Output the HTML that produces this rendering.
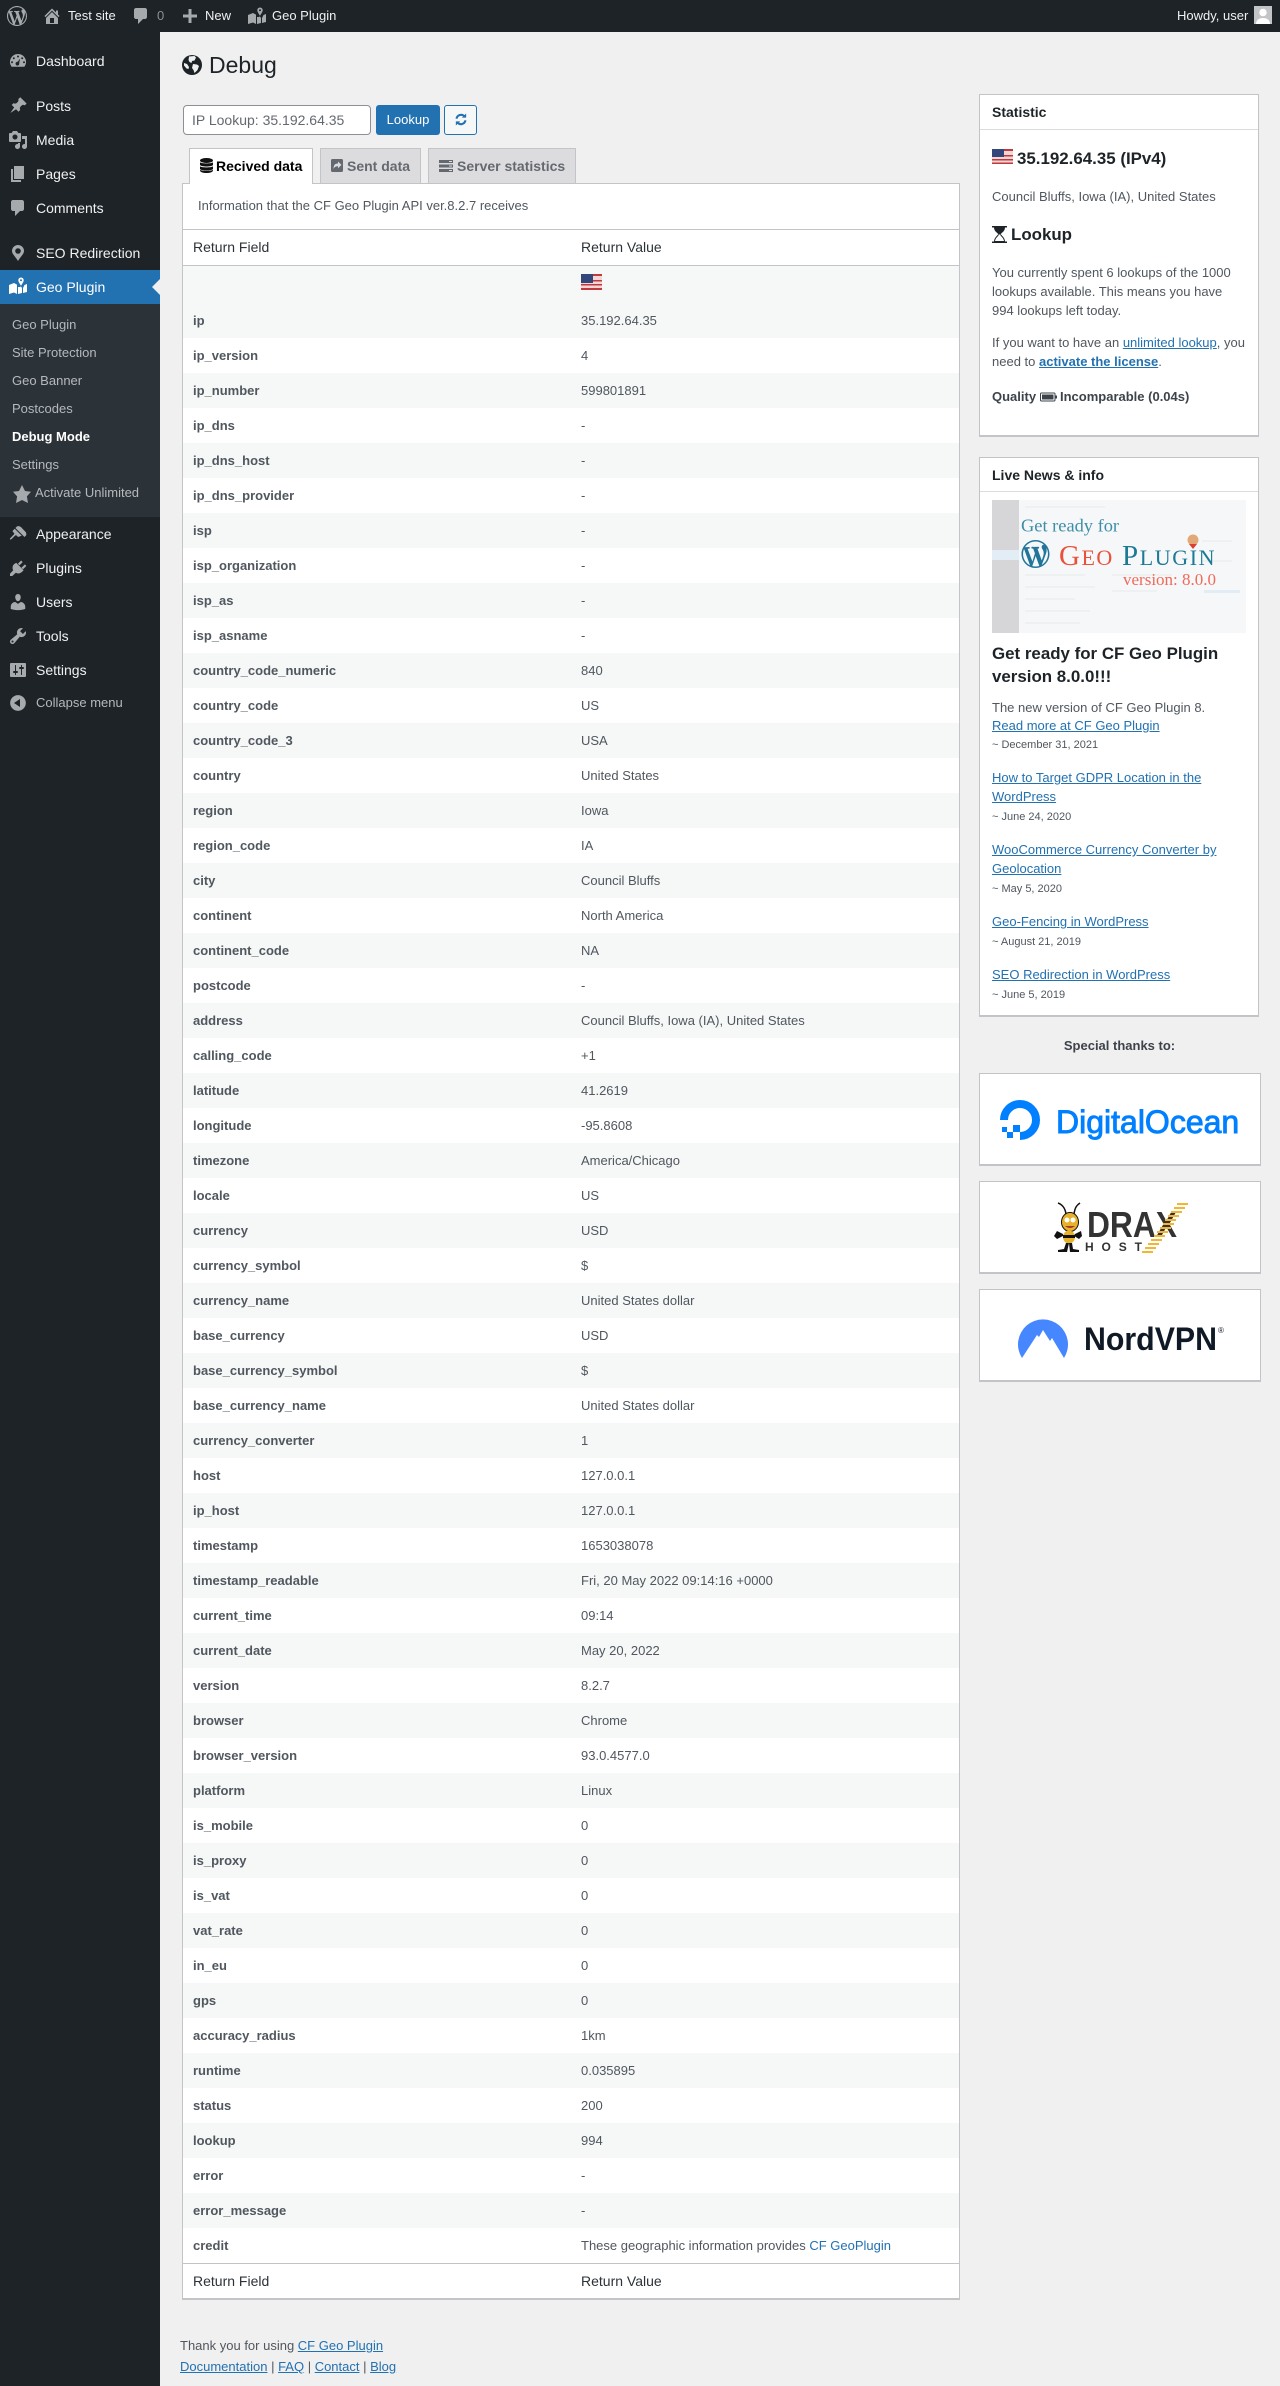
<!DOCTYPE html>
<html lang="en"><head><meta charset="utf-8"><title>Debug</title>
<style>
*{box-sizing:border-box}
html,body{margin:0;padding:0}
body{width:1280px;height:2386px;position:relative;overflow:hidden;background:#f0f0f1;font-family:"Liberation Sans",sans-serif;font-size:13px;color:#50575e}
.t{position:absolute;white-space:nowrap;line-height:20px;height:20px}
.bar{position:absolute;left:0;top:0;width:1280px;height:32px;background:#1d2327}
.side{position:absolute;left:0;top:32px;width:160px;height:2354px;background:#1d2327}
.act{position:absolute;left:0;top:270px;width:160px;height:34px;background:#2271b1}
.sub{position:absolute;left:0;top:304px;width:160px;height:213px;background:#2c3338}
.m{font-size:14px;color:#f0f0f1;left:36px}
.s{font-size:13px;color:#b4b9be;left:12px}
.b{color:#f0f0f1;font-size:13px}
svg{position:absolute;display:block}
.i{width:20px;height:20px;fill:#a7aaad;left:8px}
a{color:#2271b1;text-decoration:underline}
.box{position:absolute;background:#fff;border:1px solid #c3c4c7;border-bottom-width:2px}
.hr{position:absolute;height:1px;background:#c3c4c7}
.tab{position:absolute;top:148px;height:35px;border:1px solid #c3c4c7;border-bottom:0;background:#dcdcde;font-weight:700;font-size:14px;color:#50575e}
table{position:absolute;left:183px;top:266px;width:776px;border-collapse:collapse;table-layout:fixed}
td{height:35px;padding:0 0 0 10px;font-size:13px;color:#50575e;line-height:20px;white-space:nowrap}
td:first-child{font-weight:700;width:388px}
tr:nth-child(even){background:#f6f7f7}
tr:first-child{background:#f6f7f7}
tr:first-child td{height:37px}
td a{text-decoration:none}
.h{color:#1d2327;font-weight:700}
</style></head>
<body>
<div class="bar"></div>
<svg style="left:7px;top:6px;fill:#a7aaad" width="20" height="20" viewBox="0 0 20 20"><path d="M20 10c0-5.510-4.490-10-10-10C4.480 0 0 4.490 0 10c0 5.520 4.480 10 10 10 5.510 0 10-4.480 10-10zM7.780 15.370L4.370 6.220c.550-.020 1.170-.080 1.170-.080.500-.060.440-1.130-.060-1.110 0 0-1.450.110-2.370.110-.180 0-.370 0-.580-.010C4.120 2.690 6.870 1.110 10 1.110c2.330 0 4.450.870 6.050 2.340-.680-.110-1.650.390-1.650 1.580 0 .740.450 1.360.900 2.100.350.610.550 1.360.550 2.460 0 1.490-1.400 5-1.400 5l-3.030-8.370c.540-.020.820-.170.820-.170.500-.050.440-1.250-.060-1.220 0 0-1.440.120-2.380.120-.870 0-2.330-.120-2.330-.120-.500-.030-.560 1.200-.060 1.220l.920.080 1.260 3.410zM17.410 10c.240-.640.740-1.870.430-4.250.700 1.290 1.050 2.710 1.050 4.250 0 3.290-1.730 6.240-4.400 7.780.970-2.590 1.940-5.200 2.920-7.780zM6.100 18.090C3.120 16.650 1.110 13.530 1.110 10c0-1.300.230-2.480.72-3.590C3.250 10.300 4.670 14.200 6.100 18.090zm4.030-6.630l2.580 6.980c-.870.290-1.760.450-2.710.450-.790 0-1.570-.110-2.290-.330.810-2.380 1.620-4.740 2.420-7.100z"/></svg>
<svg style="left:42px;top:6px;fill:#a7aaad" width="20" height="20" viewBox="0 0 20 20"><path d="M16 8.500l1.530 1.530-1.060 1.060L10 4.620l-6.470 6.470-1.060-1.060L10 2.500l4 4v-2h2v4zm-6-2.460l6 5.990V18H4v-5.970zM12 17v-5H8v5h4z"/></svg>
<div class="t b" style="left:68px;top:6px">Test site</div>
<svg style="left:131px;top:6px;fill:#a7aaad" width="20" height="20" viewBox="0 0 20 20"><path d="M5 2h9c1.100 0 2 .900 2 2v7c0 1.100-.900 2-2 2h-2l-5 5v-5H5c-1.100 0-2-.900-2-2V4c0-1.100.900-2 2-2z"/></svg>
<div class="t" style="left:157px;top:6px;color:#8c8f94">0</div>
<svg style="left:180px;top:6px;fill:#a7aaad" width="20" height="20" viewBox="0 0 20 20"><path d="M17 8.500v3h-5.500V17h-3v-5.500H3v-3h5.500V3h3v5.500z"/></svg>
<div class="t b" style="left:205px;top:6px">New</div>
<svg style="left:247px;top:6px;fill:#a7aaad" width="20" height="20" viewBox="0 0 20 20"><path d="M1 9l5-2 3 1.600V18l-3-1.500L1 18zM10 18v-7l1.500 0 1.500-.5L14 12V17zM15 17l0-5 1.500-3L19 8v8zM13 1.500a2.700 2.700 0 0 1 2.700 2.700c0 1.500-1.500 3.400-2.700 5.600-1.200-2.200-2.700-4.100-2.700-5.600A2.700 2.700 0 0 1 13 1.500zm0 1.700a1 1 0 1 0 0 2 1 1 0 0 0 0-2z" fill-rule="evenodd"/></svg>
<div class="t b" style="left:272px;top:6px">Geo Plugin</div>
<div class="t b" style="left:1177px;top:6px">Howdy, user</div>
<div style="position:absolute;left:1254px;top:6px;width:18px;height:18px;background:#c3c4c7;overflow:hidden">
<svg style="left:1px;top:1px" width="16" height="17" viewBox="0 0 16 17"><circle cx="8" cy="5.500" r="3.700" fill="#fff"/><path d="M1 17c0-4 3-6 7-6s7 2 7 6z" fill="#fff"/></svg></div>

<div class="side"></div><div class="act"></div><div class="sub"></div>

<svg class="i" style="top:51px" viewBox="0 0 20 20"><path fill-rule="evenodd" d="M10 3a8 8 0 0 1 6.400 12.800H3.600A8 8 0 0 1 10 3zM10 4.500a1 1 0 1 0 0 2 1 1 0 0 0 0-2zM5.800 6.200a1 1 0 1 0 0 2 1 1 0 0 0 0-2zM14.200 6.200a1 1 0 1 0 0 2 1 1 0 0 0 0-2zM4 10.200a1 1 0 1 0 0 2 1 1 0 0 0 0-2zM16 10.200a1 1 0 1 0 0 2 1 1 0 0 0 0-2zM12.200 7.500L9.700 10.800a1.900 1.900 0 1 0 1.500 1.200z"/></svg>
<div class="t m" style="top:51px">Dashboard</div>
<svg class="i" style="top:96px" viewBox="0 0 20 20"><path d="M10.440 3.020l1.820-1.820 6.360 6.350-1.830 1.820c-1.050-.680-2.480-.570-3.410.360l-.750.750c-.920.930-1.040 2.350-.350 3.410l-1.830 1.820-2.410-2.420-5.660 3.770 3.770-5.660-2.420-2.410 1.830-1.830c1.050.690 2.480.570 3.400-.350l.750-.750c.930-.920 1.050-2.350.360-3.410z"/></svg>
<div class="t m" style="top:96px">Posts</div>
<svg class="i" style="top:130px" viewBox="0 0 20 20"><path d="M13 11V4c0-.550-.450-1-1-1h-1.670L9 1H5L3.670 3H2c-.550 0-1 .450-1 1v7c0 .550.450 1 1 1h10c.550 0 1-.450 1-1zM7 4.500c1.380 0 2.500 1.120 2.500 2.500S8.380 9.500 7 9.500 4.500 8.380 4.500 7 5.620 4.500 7 4.500zM14 6h5v10.500c0 1.380-1.120 2.500-2.500 2.500S14 17.880 14 16.500s1.120-2.500 2.500-2.500c.170 0 .340.020.500.050V9h-3V6zm-4 8.050V13h2v3.500c0 1.380-1.120 2.500-2.500 2.500S7 17.880 7 16.500 8.120 14 9.500 14c.170 0 .340.020.500.050z"/></svg>
<div class="t m" style="top:130px">Media</div>
<svg class="i" style="top:164px" viewBox="0 0 20 20"><path d="M6 15V2h10v13H6zm-1 1h8v2H3V5h2v11z"/></svg>
<div class="t m" style="top:164px">Pages</div>
<svg class="i" style="top:198px" viewBox="0 0 20 20"><path d="M5 2h9c1.100 0 2 .900 2 2v7c0 1.100-.900 2-2 2h-2l-5 5v-5H5c-1.100 0-2-.900-2-2V4c0-1.100.900-2 2-2z"/></svg>
<div class="t m" style="top:198px">Comments</div>
<svg class="i" style="top:243px" viewBox="0 0 20 20"><path fill-rule="evenodd" d="M10 2a6 6 0 0 0-6 6c0 3 3 5 6 10 3-5 6-7 6-10a6 6 0 0 0-6-6zm0 3.200a2.800 2.800 0 1 1 0 5.600 2.800 2.800 0 0 1 0-5.600z"/></svg>
<div class="t m" style="top:243px">SEO Redirection</div>
<svg class="i" style="top:276px;fill:#fff" viewBox="0 0 20 20"><path d="M1 9l5-2 3 1.600V18l-3-1.500L1 18zM10 18v-7l1.500 0 1.500-.5L14 12V17zM15 17l0-5 1.500-3L19 8v8zM13 1.500a2.700 2.700 0 0 1 2.700 2.700c0 1.500-1.500 3.400-2.700 5.600-1.200-2.200-2.700-4.100-2.700-5.600A2.700 2.700 0 0 1 13 1.500zm0 1.700a1 1 0 1 0 0 2 1 1 0 0 0 0-2z" fill-rule="evenodd"/></svg>
<div class="t m" style="top:277px;color:#fff">Geo Plugin</div>
<div style="position:absolute;left:152px;top:279px;width:0;height:0;border:8px solid transparent;border-right-color:#f0f0f1;border-left:0"></div>

<div class="t s" style="top:315px">Geo Plugin</div>
<div class="t s" style="top:343px">Site Protection</div>
<div class="t s" style="top:371px">Geo Banner</div>
<div class="t s" style="top:399px">Postcodes</div>
<div class="t s" style="top:427px;color:#fff;font-weight:700">Debug Mode</div>
<div class="t s" style="top:455px">Settings</div>
<svg style="left:12px;top:484px;fill:#a7aaad" width="20" height="20" viewBox="0 0 20 20"><path d="M10 1l3 6 6 .750-4.120 4.620L16 19l-6-3-6 3 1.120-6.630L1 7.750 7 7z"/></svg>
<div class="t s" style="top:483px;left:35px">Activate Unlimited</div>

<svg class="i" style="top:524px" viewBox="0 0 20 20"><path d="M14.480 11.060L7.410 3.990l1.500-1.500c.500-.560 2.300-.470 3.510.320 1.210.800 1.430 1.280 2.660 2.560 1.260 1.210 1.520 1.480 2.560 2.660.840.920.860 2.960.320 3.510-.100.100-1.480 1.520-1.480 1.520zm-.710.710L6.700 4.700 4.930 6.470c-.390.390-.390 1.020 0 1.410l1.060 1.060c.390.390.390 1.030 0 1.420-.600.600-1.430 1.430-2.120 2.120-.800.790-2.350 2.250-1.960 2.640l.5.500c.390.390 1.850-1.160 2.640-1.950.690-.700 1.520-1.530 2.120-2.120.390-.400 1.030-.400 1.420 0l1.060 1.050c.390.390 1.020.390 1.410 0z"/></svg>
<div class="t m" style="top:524px">Appearance</div>
<svg class="i" style="top:558px" viewBox="0 0 20 20"><path d="M13.100 2.500l1.600 1.600-3.200 3.200-1.600-1.600zM17 6.400l1.300 1.600-3.200 3.200-1.600-1.600zM8.200 4.800l7.400 7.400-1.600 1.700c-1.700 1.700-4.200 2-6.200.9L4.300 18H2v-2.300l3.200-3.500c-1.100-2-.8-4.400.9-6.100z"/></svg>
<div class="t m" style="top:558px">Plugins</div>
<svg class="i" style="top:592px" viewBox="0 0 20 20"><path d="M10 9.250c-2.270 0-2.730-3.440-2.730-3.440C7 4.020 7.820 2 9.970 2c2.160 0 2.980 2.020 2.710 3.810 0 0-.410 3.440-2.680 3.440zm0 2.570L12.720 10c2.390 0 4.520 2.330 4.520 4.530v2.490s-3.650 1.130-7.240 1.130c-3.650 0-7.240-1.130-7.240-1.130v-2.490c0-2.250 1.940-4.480 4.470-4.480z"/></svg>
<div class="t m" style="top:592px">Users</div>
<svg class="i" style="top:626px" viewBox="0 0 20 20"><path d="M16.680 9.770c-1.340 1.340-3.300 1.670-4.950.990l-5.410 6.520c-.990.990-2.590.990-3.580 0s-.990-2.590 0-3.570l6.520-5.420c-.680-1.650-.350-3.610.990-4.950 1.280-1.280 3.120-1.620 4.720-1.060l-2.890 2.890 2.820 2.820 2.860-2.870c.530 1.580.180 3.390-1.080 4.650zM3.810 16.210c.400.390 1.030.390 1.420 0 .400-.400.400-1.030 0-1.430-.390-.390-1.020-.390-1.420 0-.390.400-.390 1.030 0 1.430z"/></svg>
<div class="t m" style="top:626px">Tools</div>
<svg class="i" style="top:660px" viewBox="0 0 20 20"><path d="M18 16V4c0-.550-.450-1-1-1H3c-.550 0-1 .450-1 1v12c0 .550.450 1 1 1h14c.550 0 1-.450 1-1zM8 11h1c.550 0 1 .450 1 1s-.450 1-1 1H8v1.500c0 .280-.220.500-.500.500s-.500-.220-.500-.500V13H6c-.550 0-1-.450-1-1s.450-1 1-1h1V5.500c0-.280.220-.500.500-.500s.500.220.500.500V11zm5-2h-1c-.550 0-1-.450-1-1s.450-1 1-1h1V5.500c0-.280.220-.500.500-.500s.500.220.500.500V7h1c.550 0 1 .450 1 1s-.450 1-1 1h-1v5.500c0 .280-.220.500-.500.500s-.500-.220-.500-.500V9z"/></svg>
<div class="t m" style="top:660px">Settings</div>
<svg class="i" style="top:693px" viewBox="0 0 20 20"><path fill-rule="evenodd" d="M10 2.160c4.330 0 7.840 3.510 7.840 7.840S14.330 17.840 10 17.840 2.160 14.330 2.160 10 5.670 2.160 10 2.160zM12 14V6l-6 4z"/></svg>
<div class="t m" style="top:693px;font-size:13px;color:#b4b9be">Collapse menu</div>

<!-- Heading -->
<svg style="left:181px;top:54px" width="22" height="22" viewBox="0 0 22 22"><circle cx="11" cy="11" r="10" fill="#1d2327"/><path fill="#f0f0f1" d="M8 2.500l5.500-.5 1.500 1.500-1.500 3-2.500.5-.5 2-2-1-1-2zM12 10l4 .5 2 1.500-1.500 4-3 3-1-3-1.500-2zM3 9l3 1 2 3-.5 2-2-.5-2.500-3z"/></svg>
<div class="t" style="left:209px;top:50px;height:30px;line-height:30px;font-size:23px;color:#1d2327">Debug</div>

<!-- Lookup form -->
<div style="position:absolute;left:183px;top:105px;width:188px;height:30px;background:#fff;border:1px solid #8c8f94;border-radius:4px"></div>
<div class="t" style="left:192px;top:110px;font-size:14px;color:#646970">IP Lookup: 35.192.64.35</div>
<div style="position:absolute;left:376px;top:105px;width:64px;height:30px;background:#2271b1;border-radius:3px;color:#fff;text-align:center;line-height:30px">Lookup</div>
<div style="position:absolute;left:444px;top:105px;width:33px;height:30px;background:#f6f7f7;border:1px solid #2271b1;border-radius:3px"></div>
<svg style="left:455px;top:113px" width="12" height="13" viewBox="0 0 14 14"><path d="M1.800 6A5.300 5.300 0 0 1 11 3.400" fill="none" stroke="#2271b1" stroke-width="2.400"/><path d="M8 4.800h5V0z" fill="#2271b1"/><path d="M12.200 8A5.300 5.300 0 0 1 3 10.600" fill="none" stroke="#2271b1" stroke-width="2.400"/><path d="M6 9.200H1V14z" fill="#2271b1"/></svg>

<!-- Main box -->
<div class="box" style="left:182px;top:183px;width:778px;height:2117px"></div>
<div class="tab" style="left:189px;width:124px;height:36px;background:#fff;color:#000;z-index:2"></div>
<svg style="left:200px;top:158px;z-index:3" width="13" height="15" viewBox="0 0 13 15"><ellipse cx="6.500" cy="2.500" rx="6.500" ry="2.500" fill="#111"/><path d="M0 4.300c1 1.500 12 1.500 13 0V7c-1 2-12 2-13 0zM0 8.300c1 1.500 12 1.500 13 0V11c-1 2-12 2-13 0zM0 11.800c1 1.500 12 1.500 13 0V12.500C13 14 10 15 6.500 15S0 14 0 12.500z" fill="#111"/></svg>
<div class="t" style="left:216px;top:156px;font-size:14px;font-weight:700;color:#000;z-index:3">Recived data</div>
<div class="tab" style="left:320px;width:101px"></div>
<svg style="left:331px;top:159px" width="12" height="13" viewBox="0 0 12 13"><path fill-rule="evenodd" fill="#646970" d="M1.500 0h9A1.500 1.500 0 0 1 12 1.500v10a1.500 1.500 0 0 1-1.500 1.500h-9A1.500 1.500 0 0 1 0 11.500v-10A1.500 1.500 0 0 1 1.500 0zM7 2.500v2C4 4.500 2.500 6 2.500 10c.8-2 2.200-2.800 4.500-2.800v2l3.500-3.300z"/></svg>
<div class="t" style="left:347px;top:156px;font-size:14px;font-weight:700;color:#646970">Sent data</div>
<div class="tab" style="left:428px;width:148px"></div>
<svg style="left:439px;top:160px" width="14" height="12" viewBox="0 0 14 12"><path fill-rule="evenodd" fill="#646970" d="M0 0h14v3H0zM0 4.500h14v3H0zM0 9h14v3H0zM10 1v1h3V1zM10 5.500v1h3v-1zM10 10v1h3v-1z"/></svg>
<div class="t" style="left:457px;top:156px;font-size:14px;font-weight:700;color:#646970">Server statistics</div>

<div class="t" style="left:198px;top:196px">Information that the CF Geo Plugin API ver.8.2.7 receives</div>
<div class="hr" style="left:183px;top:229px;width:776px"></div>
<div class="t" style="left:193px;top:237px;font-size:14px;color:#2c3338">Return Field</div>
<div class="t" style="left:581px;top:237px;font-size:14px;color:#2c3338">Return Value</div>
<div class="hr" style="left:183px;top:265px;width:776px"></div>

<table>
<tr><td></td><td><svg style="left:398px;top:8px;position:absolute" width="21" height="16" viewBox="0 0 21 16"><rect width="21" height="16" fill="#f3d6d6"/><path d="M0 0h21v2H0zM0 6h21v1.500H0zM0 10h21v1.500H0zM0 14h21v2H0z" fill="#c0393f"/><rect width="12" height="9" fill="#33477a"/></svg></td></tr>
<tr><td>ip</td><td>35.192.64.35</td></tr>
<tr><td>ip_version</td><td>4</td></tr>
<tr><td>ip_number</td><td>599801891</td></tr>
<tr><td>ip_dns</td><td>-</td></tr>
<tr><td>ip_dns_host</td><td>-</td></tr>
<tr><td>ip_dns_provider</td><td>-</td></tr>
<tr><td>isp</td><td>-</td></tr>
<tr><td>isp_organization</td><td>-</td></tr>
<tr><td>isp_as</td><td>-</td></tr>
<tr><td>isp_asname</td><td>-</td></tr>
<tr><td>country_code_numeric</td><td>840</td></tr>
<tr><td>country_code</td><td>US</td></tr>
<tr><td>country_code_3</td><td>USA</td></tr>
<tr><td>country</td><td>United States</td></tr>
<tr><td>region</td><td>Iowa</td></tr>
<tr><td>region_code</td><td>IA</td></tr>
<tr><td>city</td><td>Council Bluffs</td></tr>
<tr><td>continent</td><td>North America</td></tr>
<tr><td>continent_code</td><td>NA</td></tr>
<tr><td>postcode</td><td>-</td></tr>
<tr><td>address</td><td>Council Bluffs, Iowa (IA), United States</td></tr>
<tr><td>calling_code</td><td>+1</td></tr>
<tr><td>latitude</td><td>41.2619</td></tr>
<tr><td>longitude</td><td>-95.8608</td></tr>
<tr><td>timezone</td><td>America/Chicago</td></tr>
<tr><td>locale</td><td>US</td></tr>
<tr><td>currency</td><td>USD</td></tr>
<tr><td>currency_symbol</td><td>$</td></tr>
<tr><td>currency_name</td><td>United States dollar</td></tr>
<tr><td>base_currency</td><td>USD</td></tr>
<tr><td>base_currency_symbol</td><td>$</td></tr>
<tr><td>base_currency_name</td><td>United States dollar</td></tr>
<tr><td>currency_converter</td><td>1</td></tr>
<tr><td>host</td><td>127.0.0.1</td></tr>
<tr><td>ip_host</td><td>127.0.0.1</td></tr>
<tr><td>timestamp</td><td>1653038078</td></tr>
<tr><td>timestamp_readable</td><td>Fri, 20 May 2022 09:14:16 +0000</td></tr>
<tr><td>current_time</td><td>09:14</td></tr>
<tr><td>current_date</td><td>May 20, 2022</td></tr>
<tr><td>version</td><td>8.2.7</td></tr>
<tr><td>browser</td><td>Chrome</td></tr>
<tr><td>browser_version</td><td>93.0.4577.0</td></tr>
<tr><td>platform</td><td>Linux</td></tr>
<tr><td>is_mobile</td><td>0</td></tr>
<tr><td>is_proxy</td><td>0</td></tr>
<tr><td>is_vat</td><td>0</td></tr>
<tr><td>vat_rate</td><td>0</td></tr>
<tr><td>in_eu</td><td>0</td></tr>
<tr><td>gps</td><td>0</td></tr>
<tr><td>accuracy_radius</td><td>1km</td></tr>
<tr><td>runtime</td><td>0.035895</td></tr>
<tr><td>status</td><td>200</td></tr>
<tr><td>lookup</td><td>994</td></tr>
<tr><td>error</td><td>-</td></tr>
<tr><td>error_message</td><td>-</td></tr>
<tr><td>credit</td><td>These geographic information provides <a href="#">CF GeoPlugin</a></td></tr>
</table>
<div class="hr" style="left:183px;top:2263px;width:776px"></div>
<div class="t" style="left:193px;top:2271px;font-size:14px;color:#2c3338">Return Field</div>
<div class="t" style="left:581px;top:2271px;font-size:14px;color:#2c3338">Return Value</div>

<!-- Footer -->
<div class="t" style="left:180px;top:2336px">Thank you for using <a href="#">CF Geo Plugin</a></div>
<div class="t" style="left:180px;top:2357px"><a href="#">Documentation</a> | <a href="#">FAQ</a> | <a href="#">Contact</a> | <a href="#">Blog</a></div>

<!-- Statistic -->
<div class="box" style="left:979px;top:94px;width:280px;height:343px"></div>
<div class="hr" style="left:980px;top:129px;width:278px;background:#dcdcde"></div>
<div class="t h" style="left:992px;top:102px;font-size:14px">Statistic</div>
<svg style="left:992px;top:149px" width="21" height="15" viewBox="0 0 21 15"><rect width="21" height="15" fill="#f3d6d6"/><path d="M0 0h21v2H0zM0 6h21v1.500H0zM0 10h21v1.500H0zM0 13.500h21V15H0z" fill="#c0393f"/><rect width="12" height="8" fill="#33477a"/></svg>
<div class="t h" style="left:1017px;top:149px;font-size:16.9px">35.192.64.35 (IPv4)</div>
<div class="t" style="left:992px;top:187px">Council Bluffs, Iowa (IA), United States</div>
<svg style="left:992px;top:226px" width="15" height="17" viewBox="0 0 15 17"><path d="M0 0h15v1.500H0zM0 15.500h15V17H0z" fill="#1d2327"/><path d="M2 1.500h11c0 4-4 5.500-4.500 7h-2C6 7 2 5.500 2 1.500z" fill="#1d2327"/><path d="M6.500 8.500C6 10 2.500 11.500 2.500 15.500h10c0-4-3.500-5.500-4-7" fill="none" stroke="#1d2327" stroke-width="1"/></svg>
<div class="t h" style="left:1011px;top:225px;font-size:16.9px">Lookup</div>
<div class="t" style="left:992px;top:263px">You currently spent 6 lookups of the 1000</div>
<div class="t" style="left:992px;top:282px">lookups available. This means you have</div>
<div class="t" style="left:992px;top:301px">994 lookups left today.</div>
<div class="t" style="left:992px;top:333px">If you want to have an <a href="#">unlimited lookup</a>, you</div>
<div class="t" style="left:992px;top:352px">need to <a href="#" style="font-weight:700">activate the license</a>.</div>
<div class="t" style="left:992px;top:387px;font-weight:700;color:#3c434a">Quality</div>
<svg style="left:1040px;top:392px" width="17" height="10" viewBox="0 0 17 10"><rect x=".5" y="1" width="14.500" height="8" rx="1" fill="none" stroke="#3c434a"/><rect x="2" y="2.500" width="11.500" height="5" fill="#3c434a"/><rect x="15.500" y="3.500" width="1.500" height="3" fill="#3c434a"/></svg>
<div class="t" style="left:1060px;top:387px;font-weight:700;color:#3c434a">Incomparable (0.04s)</div>

<!-- News -->
<div class="box" style="left:979px;top:457px;width:280px;height:560px"></div>
<div class="hr" style="left:980px;top:491px;width:278px;background:#dcdcde"></div>
<div class="t h" style="left:992px;top:465px;font-size:14px">Live News &amp; info</div>
<svg style="left:992px;top:500px" width="254" height="133" viewBox="0 0 254 133">
<rect width="254" height="133" fill="#f6f7f8"/>
<rect width="27" height="133" fill="#d6d6d8"/>
<rect y="50" width="27" height="10" fill="#e2edf6"/>
<g fill="#eff0f1"><rect x="33" y="6" width="80" height="2"/><rect x="33" y="74" width="60" height="2"/><rect x="33" y="86" width="70" height="2"/><rect x="33" y="98" width="50" height="2"/><rect x="33" y="110" width="65" height="2"/><rect x="33" y="122" width="55" height="2"/><rect x="120" y="74" width="60" height="2"/><rect x="120" y="90" width="45" height="2"/><rect x="210" y="40" width="30" height="2"/><rect x="210" y="60" width="30" height="2"/></g>
<rect x="212" y="90" width="36" height="3" fill="#e2ecf5"/>
<text x="29" y="31.500" font-family="Liberation Serif,serif" font-size="18.400" fill="#3e8ea8">Get ready for</text>
<g transform="translate(29.500 40) scale(1.400)" fill="#21759b"><path d="M20 10c0-5.510-4.490-10-10-10C4.480 0 0 4.490 0 10c0 5.520 4.480 10 10 10 5.510 0 10-4.480 10-10zM7.780 15.370L4.370 6.220c.550-.020 1.170-.080 1.170-.080.500-.060.440-1.130-.060-1.110 0 0-1.450.110-2.370.110-.180 0-.370 0-.580-.010C4.120 2.690 6.870 1.110 10 1.110c2.330 0 4.450.870 6.050 2.340-.680-.110-1.650.390-1.650 1.580 0 .740.450 1.360.900 2.100.350.610.550 1.360.550 2.460 0 1.490-1.400 5-1.400 5l-3.030-8.370c.540-.020.820-.170.820-.170.500-.050.440-1.250-.060-1.220 0 0-1.440.120-2.380.120-.870 0-2.330-.120-2.330-.120-.500-.030-.560 1.200-.060 1.220l.920.080 1.260 3.410zM17.410 10c.240-.640.740-1.870.430-4.250.700 1.290 1.050 2.710 1.050 4.250 0 3.290-1.730 6.240-4.400 7.780.970-2.590 1.940-5.200 2.920-7.780zM6.100 18.090C3.120 16.650 1.110 13.530 1.110 10c0-1.300.230-2.480.72-3.590C3.250 10.300 4.670 14.200 6.100 18.090zm4.030-6.630l2.580 6.980c-.870.290-1.760.450-2.710.450-.790 0-1.570-.110-2.290-.330.810-2.380 1.620-4.740 2.420-7.100z"/></g>
<text x="67" y="65" font-family="Liberation Serif,serif" font-size="29" fill="#e8523a" letter-spacing="1.500">G<tspan font-size="22">EO</tspan></text>
<text x="130" y="65" font-family="Liberation Serif,serif" font-size="29" fill="#1c7a96" letter-spacing="1.600">P<tspan font-size="22">LUGIN</tspan></text>
<circle cx="201" cy="40" r="5.500" fill="#e3a878"/><path d="M197 44l4 5 4-5z" fill="#d9402f"/>
<text x="131" y="85" font-family="Liberation Serif,serif" font-size="17" fill="#ef6a5a">version: 8.0.0</text>
</svg>
<div class="t h" style="left:992px;top:644px;font-size:16.9px">Get ready for CF Geo Plugin</div>
<div class="t h" style="left:992px;top:667px;font-size:16.9px">version 8.0.0!!!</div>
<div class="t" style="left:992px;top:698px">The new version of CF Geo Plugin 8.</div>
<div class="t" style="left:992px;top:716px"><a href="#">Read more at CF Geo Plugin</a></div>
<div class="t" style="left:992px;top:735px;font-size:11px">~ December 31, 2021</div>
<div class="t" style="left:992px;top:768px"><a href="#">How to Target GDPR Location in the</a></div>
<div class="t" style="left:992px;top:787px"><a href="#">WordPress</a></div>
<div class="t" style="left:992px;top:807px;font-size:11px">~ June 24, 2020</div>
<div class="t" style="left:992px;top:840px"><a href="#">WooCommerce Currency Converter by</a></div>
<div class="t" style="left:992px;top:859px"><a href="#">Geolocation</a></div>
<div class="t" style="left:992px;top:879px;font-size:11px">~ May 5, 2020</div>
<div class="t" style="left:992px;top:912px"><a href="#">Geo-Fencing in WordPress</a></div>
<div class="t" style="left:992px;top:932px;font-size:11px">~ August 21, 2019</div>
<div class="t" style="left:992px;top:965px"><a href="#">SEO Redirection in WordPress</a></div>
<div class="t" style="left:992px;top:985px;font-size:11px">~ June 5, 2019</div>

<div class="t" style="left:979px;width:281px;text-align:center;top:1036px;font-weight:700;color:#3c434a">Special thanks to:</div>

<!-- Logos -->
<div class="box" style="left:979px;top:1073px;width:282px;height:93px"></div>
<svg style="left:979px;top:1073px" width="282" height="93" viewBox="0 0 282 93">
<path d="M41 63A16 16 0 1 0 25 47" fill="none" stroke="#0080ff" stroke-width="8"/>
<path d="M34 52h7v7h-7zM28 59h6v6h-6zM23 54h5v5h-5z" fill="#0080ff"/>
<text x="77" y="60" font-family="Liberation Sans,sans-serif" font-size="32" fill="#0080ff" stroke="#0080ff" stroke-width=".9">DigitalOcean</text>
</svg>
<div class="box" style="left:979px;top:1181px;width:282px;height:93px"></div>
<svg style="left:979px;top:1181px" width="282" height="93" viewBox="0 0 282 93">
<text x="108" y="56" font-family="Liberation Sans,sans-serif" font-weight="700" font-size="36" fill="#333" textLength="90" lengthAdjust="spacingAndGlyphs">DRAX</text>
<path d="M198 23h11M195 27h11M192 31h11M189 35h11M186 39h11M184 43h11M181 47h11M178 51h11M175 55h11M172 59h11M169 63h11M166 67h11M163 71h11" stroke="#f5b530" stroke-width="2" fill="none"/>
<text x="106" y="70" font-family="Liberation Sans,sans-serif" font-weight="700" font-size="12" fill="#333" textLength="57">HOST</text>
<path d="M87 33c-1-7-5-10-8-11M95 33c1-7 3-9 6-11" fill="none" stroke="#111" stroke-width="1.500"/>
<ellipse cx="91" cy="41" rx="8.500" ry="9.500" fill="#e8b12a" stroke="#111"/>
<circle cx="88" cy="39" r="2.500" fill="#fff"/><circle cx="94" cy="39" r="2.500" fill="#fff"/><path d="M86 45q5 4 10 0z" fill="#a33"/>
<ellipse cx="90" cy="56" rx="6" ry="6.500" fill="#e8b12a"/><rect x="84" y="54" width="12" height="3" fill="#111"/>
<path d="M84 53l-6-3-3 5 3 3 6-3zM96 53l6-3 1 5-3 3-5-3z" fill="#111"/>
<path d="M87 62l-2 6-6 1v2h9l2-9zM93 62l1 6 6 1v2h-9l-1-9z" fill="#111"/>
</svg>
<div class="box" style="left:979px;top:1289px;width:282px;height:93px"></div>
<svg style="left:979px;top:1289px" width="282" height="93" viewBox="0 0 282 93">
<path d="M43 69A25 25 0 1 1 85 69L73 49l-2 3-7-11-4 7-2-2z" fill="#4687ff"/>
<text x="105" y="61" font-family="Liberation Sans,sans-serif" font-weight="700" font-size="32" fill="#101a26" textLength="133" lengthAdjust="spacingAndGlyphs">NordVPN</text>
<text x="239" y="44" font-family="Liberation Sans,sans-serif" font-size="8" fill="#101a26">®</text>
</svg>
</body></html>
